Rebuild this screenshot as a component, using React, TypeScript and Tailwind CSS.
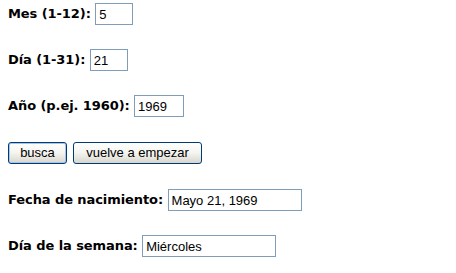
import React from "react";

const label = "font-['DejaVu_Sans',Verdana,sans-serif] font-bold text-[13px] tracking-[-0.08px] text-black whitespace-pre";
const input =
  "h-[22px] border border-[#7f9db9] bg-white px-[3px] font-['Liberation_Sans',Arial,sans-serif] text-[13px] text-black outline-none";

export default function App() {
  return (
    <div className="relative w-[456px] h-[273px] bg-white pl-[8px] flex flex-col">
      <div className="mt-[3px] h-[22px] flex items-center">
        <span className={label}>Mes (1-12): </span>
        <input className={`${input} w-[38px]`} defaultValue="5" />
      </div>
      <div className="mt-[24px] h-[22px] flex items-center">
        <span className={label}>Día (1-31): </span>
        <input className={`${input} w-[38px]`} defaultValue="21" />
      </div>
      <div className="mt-[24px] h-[22px] flex items-center">
        <span className={label}>Año (p.ej. 1960): </span>
        <input className={`${input} w-[50px]`} defaultValue="1969" />
      </div>
      <div className="mt-[25px] h-[22px] flex items-center gap-[6px]">
        <button className="h-[22px] w-[59px] rounded-[3px] border border-[#003c74] bg-gradient-to-b from-white via-[#f4f4f0] to-[#d8d6cc] p-0 font-['Liberation_Sans',Arial,sans-serif] text-[13px] text-black shadow-[inset_0_0_0_1px_#a8c4ee]">
          busca
        </button>
        <button className="h-[22px] w-[129px] rounded-[3px] border border-[#003c74] bg-gradient-to-b from-white via-[#f4f4f0] to-[#d8d6cc] p-0 font-['Liberation_Sans',Arial,sans-serif] text-[13px] text-black">
          vuelve a empezar
        </button>
      </div>
      <div className="mt-[25px] h-[22px] flex items-center">
        <span className={label}>Fecha de nacimiento: </span>
        <input className={`${input} w-[134px]`} defaultValue="Mayo 21, 1969" />
      </div>
      <div className="mt-[24px] h-[22px] flex items-center">
        <span className={label}>Día de la semana: </span>
        <input className={`${input} w-[134px]`} defaultValue="Miércoles" />
      </div>
    </div>
  );
}
